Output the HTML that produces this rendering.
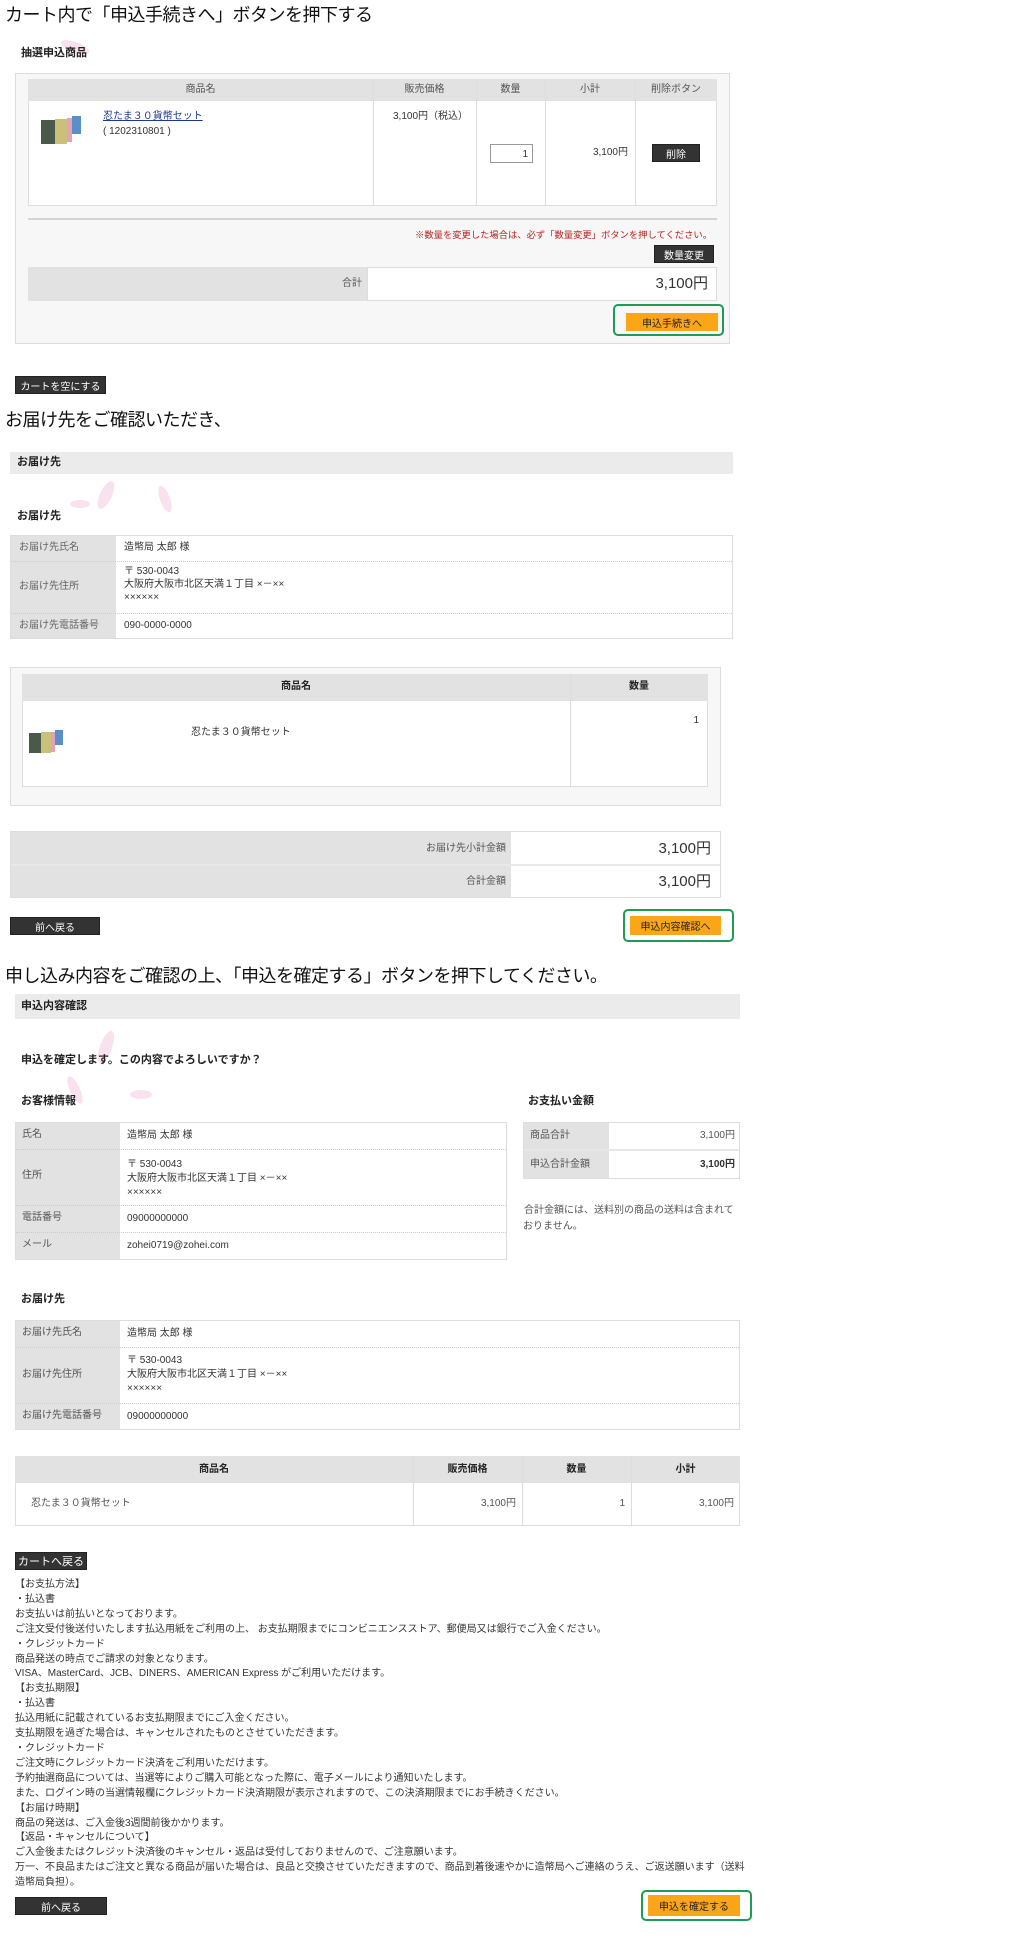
<!DOCTYPE html>
<html><head><meta charset="utf-8">
<style>
*{margin:0;padding:0;box-sizing:border-box}
body{width:1009px;height:1956px;background:#fff;position:relative;overflow:hidden;font-family:"Liberation Sans","Noto Sans CJK JP",sans-serif;color:#333;font-size:10px}
.a{position:absolute}
.t{position:absolute;white-space:nowrap;line-height:1}
.big{font-size:18px;color:#111;letter-spacing:-0.5px}
.b{font-weight:bold;font-size:11px;color:#222}
.g{background:#e2e2e2}
.bd{border:1px solid #ddd}
.btn{position:absolute;background:#333;color:#fff;font-size:10px;display:flex;align-items:center;justify-content:center;border:1px solid #222}
.or{position:absolute;background:#fba619;color:#222;font-size:10px;display:flex;align-items:center;justify-content:center}
.gr{position:absolute;border:2px solid #1e9b55;border-radius:5px}
.hl{position:absolute;height:1px;border-top:1px dotted #ccc}
.vl{position:absolute;width:1px;background:#ddd}
.r{text-align:right}
.petal{position:absolute;background:#f7d5e6;border-radius:50%;opacity:.7}
</style></head><body>

<!-- Section 1 -->
<div class="t big" style="left:5px;top:6px">カート内で「申込手続きへ」ボタンを押下する</div>
<div class="petal" style="left:60px;top:42px;width:30px;height:10px;transform:rotate(20deg)"></div>
<div class="t b" style="left:21px;top:48px">抽選申込商品</div>
<div class="a bd" style="left:15px;top:73px;width:715px;height:271px;background:#f7f7f7"></div>
<div class="a g" style="left:28px;top:79px;width:689px;height:22px"></div>
<div class="a" style="left:28px;top:101px;width:689px;height:105px;background:#fff;border:1px solid #ddd;border-top:none"></div>
<div class="vl" style="left:373px;top:79px;height:127px"></div>
<div class="vl" style="left:476px;top:79px;height:127px"></div>
<div class="vl" style="left:545px;top:79px;height:127px"></div>
<div class="vl" style="left:635px;top:79px;height:127px"></div>
<div class="t" style="left:28px;width:345px;text-align:center;top:85px;color:#555">商品名</div>
<div class="t" style="left:373px;width:103px;text-align:center;top:85px;color:#555">販売価格</div>
<div class="t" style="left:476px;width:69px;text-align:center;top:85px;color:#555">数量</div>
<div class="t" style="left:545px;width:90px;text-align:center;top:85px;color:#555">小計</div>
<div class="t" style="left:635px;width:82px;text-align:center;top:85px;color:#555">削除ボタン</div>
<svg class="a" style="left:41px;top:116px" width="44" height="30"><rect x="0" y="4" width="14" height="24" fill="#4a5a4a"/><rect x="14" y="3" width="12" height="25" fill="#c9c07a"/><rect x="26" y="2" width="5" height="24" fill="#e8a0b8"/><rect x="31" y="0" width="9" height="18" fill="#5b8fc8"/></svg>
<div class="t" style="left:103px;top:112px;color:#1a3a8a;text-decoration:underline">忍たま３０貨幣セット</div>
<div class="t" style="left:103px;top:127px">( 1202310801 )</div>
<div class="t" style="left:393px;top:112px">3,100円（税込）</div>
<div class="a" style="left:490px;top:144px;width:43px;height:19px;border:1px solid #999;background:#fff;text-align:right;padding:4px 4px 0 0">1</div>
<div class="t r" style="left:560px;width:68px;top:148px">3,100円</div>
<div class="btn" style="left:652px;top:144px;width:48px;height:18px">削除</div>
<div class="a" style="left:28px;top:218px;width:689px;height:2px;background:#d4d4d4"></div>
<div class="t r" style="left:400px;width:312px;top:231px;color:#b22;font-size:9.3px">※数量を変更した場合は、必ず「数量変更」ボタンを押してください。</div>
<div class="btn" style="left:654px;top:245px;width:60px;height:18px">数量変更</div>
<div class="a g" style="left:28px;top:267px;width:339px;height:34px"></div>
<div class="a" style="left:367px;top:267px;width:350px;height:34px;background:#fff;border:1px solid #ddd"></div>
<div class="t r" style="left:300px;width:62px;top:279px;color:#555">合計</div>
<div class="t r" style="left:560px;width:148px;top:276px;font-size:15px">3,100円</div>
<div class="gr" style="left:613px;top:304px;width:111px;height:32px"></div>
<div class="or" style="left:626px;top:313px;width:92px;height:18px">申込手続きへ</div>
<div class="btn" style="left:15px;top:376px;width:91px;height:18px">カートを空にする</div>

<!-- Section 2 -->
<div class="t big" style="left:5px;top:411px">お届け先をご確認いただき、</div>
<div class="petal" style="left:100px;top:480px;width:12px;height:30px;transform:rotate(25deg)"></div>
<div class="petal" style="left:160px;top:485px;width:10px;height:28px;transform:rotate(-20deg)"></div>
<div class="petal" style="left:70px;top:500px;width:20px;height:8px"></div>
<div class="a" style="left:10px;top:452px;width:723px;height:22px;background:#ebebeb"></div>
<div class="t b" style="left:17px;top:457px">お届け先</div>
<div class="t b" style="left:17px;top:511px">お届け先</div>
<div class="a bd" style="left:10px;top:535px;width:723px;height:104px;background:#fff"></div>
<div class="a g" style="left:11px;top:536px;width:105px;height:102px"></div>
<div class="hl" style="left:11px;top:561px;width:721px"></div>
<div class="hl" style="left:11px;top:613px;width:721px"></div>
<div class="t" style="left:19px;top:543px;color:#666">お届け先氏名</div>
<div class="t" style="left:19px;top:582px;color:#666">お届け先住所</div>
<div class="t" style="left:19px;top:621px;color:#666">お届け先電話番号</div>
<div class="t" style="left:124px;top:543px">造幣局 太郎 様</div>
<div class="t" style="left:124px;top:567px">〒 530-0043</div>
<div class="t" style="left:124px;top:580px">大阪府大阪市北区天満１丁目 ×－××</div>
<div class="t" style="left:124px;top:593px">××××××</div>
<div class="t" style="left:124px;top:621px">090-0000-0000</div>

<div class="a bd" style="left:10px;top:667px;width:711px;height:139px;background:#f7f7f7"></div>
<div class="a g" style="left:22px;top:674px;width:686px;height:27px"></div>
<div class="a" style="left:22px;top:701px;width:686px;height:86px;background:#fff;border:1px solid #ddd;border-top:none"></div>
<div class="vl" style="left:570px;top:674px;height:113px"></div>
<div class="t b" style="left:22px;width:548px;text-align:center;top:682px;font-size:10px">商品名</div>
<div class="t b" style="left:570px;width:138px;text-align:center;top:682px;font-size:10px">数量</div>
<svg class="a" style="left:29px;top:730px" width="38" height="24"><rect x="0" y="3" width="12" height="20" fill="#4a5a4a"/><rect x="12" y="2" width="10" height="21" fill="#c9c07a"/><rect x="22" y="2" width="4" height="20" fill="#e8a0b8"/><rect x="26" y="0" width="8" height="15" fill="#5b8fc8"/></svg>
<div class="t" style="left:191px;top:728px">忍たま３０貨幣セット</div>
<div class="t r" style="left:650px;width:49px;top:716px">1</div>

<div class="a bd" style="left:10px;top:831px;width:711px;height:67px;background:#fff"></div>
<div class="a g" style="left:11px;top:832px;width:500px;height:65px"></div>
<div class="a" style="left:11px;top:864px;width:709px;height:2px;background:#e8e8e8"></div>
<div class="t r" style="left:300px;width:206px;top:844px;color:#555">お届け先小計金額</div>
<div class="t r" style="left:300px;width:206px;top:877px;color:#555">合計金額</div>
<div class="t r" style="left:560px;width:151px;top:841px;font-size:15px">3,100円</div>
<div class="t r" style="left:560px;width:151px;top:874px;font-size:15px">3,100円</div>
<div class="btn" style="left:10px;top:917px;width:90px;height:18px">前へ戻る</div>
<div class="gr" style="left:623px;top:909px;width:111px;height:33px"></div>
<div class="or" style="left:630px;top:916px;width:91px;height:19px">申込内容確認へ</div>

<!-- Section 3 -->
<div class="t big" style="left:5px;top:967px">申し込み内容をご確認の上、「申込を確定する」ボタンを押下してください。</div>
<div class="a" style="left:15px;top:994px;width:725px;height:25px;background:#ebebeb"></div>
<div class="t b" style="left:21px;top:1001px">申込内容確認</div>
<div class="petal" style="left:100px;top:1030px;width:12px;height:34px;transform:rotate(20deg)"></div>
<div class="petal" style="left:70px;top:1075px;width:10px;height:30px;transform:rotate(-25deg)"></div>
<div class="petal" style="left:130px;top:1090px;width:22px;height:9px"></div>
<div class="t b" style="left:21px;top:1055px">申込を確定します。この内容でよろしいですか？</div>
<div class="t b" style="left:21px;top:1096px">お客様情報</div>
<div class="t b" style="left:528px;top:1096px">お支払い金額</div>

<div class="a bd" style="left:15px;top:1122px;width:492px;height:138px;background:#fff"></div>
<div class="a g" style="left:16px;top:1123px;width:104px;height:136px"></div>
<div class="hl" style="left:16px;top:1149px;width:490px"></div>
<div class="hl" style="left:16px;top:1205px;width:490px"></div>
<div class="hl" style="left:16px;top:1232px;width:490px"></div>
<div class="t" style="left:22px;top:1130px;color:#555">氏名</div>
<div class="t" style="left:22px;top:1171px;color:#555">住所</div>
<div class="t" style="left:22px;top:1213px;color:#555">電話番号</div>
<div class="t" style="left:22px;top:1240px;color:#555">メール</div>
<div class="t" style="left:127px;top:1131px">造幣局 太郎 様</div>
<div class="t" style="left:127px;top:1160px">〒 530-0043</div>
<div class="t" style="left:127px;top:1174px">大阪府大阪市北区天満１丁目 ×－××</div>
<div class="t" style="left:127px;top:1188px">××××××</div>
<div class="t" style="left:127px;top:1214px">09000000000</div>
<div class="t" style="left:127px;top:1241px">zohei0719@zohei.com</div>

<div class="a bd" style="left:523px;top:1122px;width:217px;height:57px;background:#fff"></div>
<div class="a g" style="left:524px;top:1123px;width:85px;height:55px"></div>
<div class="a" style="left:524px;top:1149px;width:215px;height:2px;background:#e6e6e6"></div>
<div class="t" style="left:530px;top:1131px;color:#555">商品合計</div>
<div class="t" style="left:530px;top:1160px;color:#555">申込合計金額</div>
<div class="t r" style="left:620px;width:115px;top:1131px;color:#555">3,100円</div>
<div class="t r" style="left:620px;width:115px;top:1160px;font-weight:bold">3,100円</div>
<div class="t" style="left:524px;top:1206px;color:#555">合計金額には、送料別の商品の送料は含まれて</div>
<div class="t" style="left:523px;top:1222px;color:#555">おりません。</div>

<div class="t b" style="left:21px;top:1294px">お届け先</div>
<div class="a bd" style="left:15px;top:1320px;width:725px;height:110px;background:#fff"></div>
<div class="a g" style="left:16px;top:1321px;width:104px;height:108px"></div>
<div class="hl" style="left:16px;top:1347px;width:723px"></div>
<div class="hl" style="left:16px;top:1403px;width:723px"></div>
<div class="t" style="left:22px;top:1328px;color:#555">お届け先氏名</div>
<div class="t" style="left:22px;top:1370px;color:#555">お届け先住所</div>
<div class="t" style="left:22px;top:1411px;color:#555">お届け先電話番号</div>
<div class="t" style="left:127px;top:1329px">造幣局 太郎 様</div>
<div class="t" style="left:127px;top:1356px">〒 530-0043</div>
<div class="t" style="left:127px;top:1370px">大阪府大阪市北区天満１丁目 ×－××</div>
<div class="t" style="left:127px;top:1384px">××××××</div>
<div class="t" style="left:127px;top:1412px">09000000000</div>

<div class="a g" style="left:15px;top:1456px;width:725px;height:27px"></div>
<div class="a" style="left:15px;top:1483px;width:725px;height:43px;background:#fff;border:1px solid #ddd;border-top:none"></div>
<div class="vl" style="left:413px;top:1456px;height:70px"></div>
<div class="vl" style="left:522px;top:1456px;height:70px"></div>
<div class="vl" style="left:631px;top:1456px;height:70px"></div>
<div class="t b" style="left:15px;width:398px;text-align:center;top:1465px;font-size:10px">商品名</div>
<div class="t b" style="left:413px;width:109px;text-align:center;top:1465px;font-size:10px">販売価格</div>
<div class="t b" style="left:522px;width:109px;text-align:center;top:1465px;font-size:10px">数量</div>
<div class="t b" style="left:631px;width:109px;text-align:center;top:1465px;font-size:10px">小計</div>
<div class="t" style="left:31px;top:1499px;color:#555">忍たま３０貨幣セット</div>
<div class="t r" style="left:420px;width:96px;top:1499px;color:#555">3,100円</div>
<div class="t r" style="left:530px;width:95px;top:1499px;color:#555">1</div>
<div class="t r" style="left:640px;width:94px;top:1499px;color:#555">3,100円</div>

<div class="btn" style="left:15px;top:1552px;width:72px;height:18px;font-size:11px">カートへ戻る</div>
<div class="a" style="left:15px;top:1578px;line-height:14.9px;font-size:10px;color:#333;white-space:nowrap">
【お支払方法】<br>・払込書<br>お支払いは前払いとなっております。<br>ご注文受付後送付いたします払込用紙をご利用の上、 お支払期限までにコンビニエンスストア、郵便局又は銀行でご入金ください。<br>・クレジットカード<br>商品発送の時点でご請求の対象となります。<br>VISA、MasterCard、JCB、DINERS、AMERICAN Express がご利用いただけます。<br>【お支払期限】<br>・払込書<br>払込用紙に記載されているお支払期限までにご入金ください。<br>支払期限を過ぎた場合は、キャンセルされたものとさせていただきます。<br>・クレジットカード<br>ご注文時にクレジットカード決済をご利用いただけます。<br>予約抽選商品については、当選等によりご購入可能となった際に、電子メールにより通知いたします。<br>また、ログイン時の当選情報欄にクレジットカード決済期限が表示されますので、この決済期限までにお手続きください。<br>【お届け時期】<br>商品の発送は、ご入金後3週間前後かかります。<br>【返品・キャンセルについて】<br>ご入金後またはクレジット決済後のキャンセル・返品は受付しておりませんので、ご注意願います。<br>万一、不良品またはご注文と異なる商品が届いた場合は、良品と交換させていただきますので、商品到着後速やかに造幣局へご連絡のうえ、ご返送願います（送料<br>造幣局負担）。
</div>
<div class="btn" style="left:15px;top:1897px;width:92px;height:18px">前へ戻る</div>
<div class="gr" style="left:641px;top:1890px;width:111px;height:31px"></div>
<div class="or" style="left:648px;top:1895px;width:92px;height:21px">申込を確定する</div>
</body></html>
